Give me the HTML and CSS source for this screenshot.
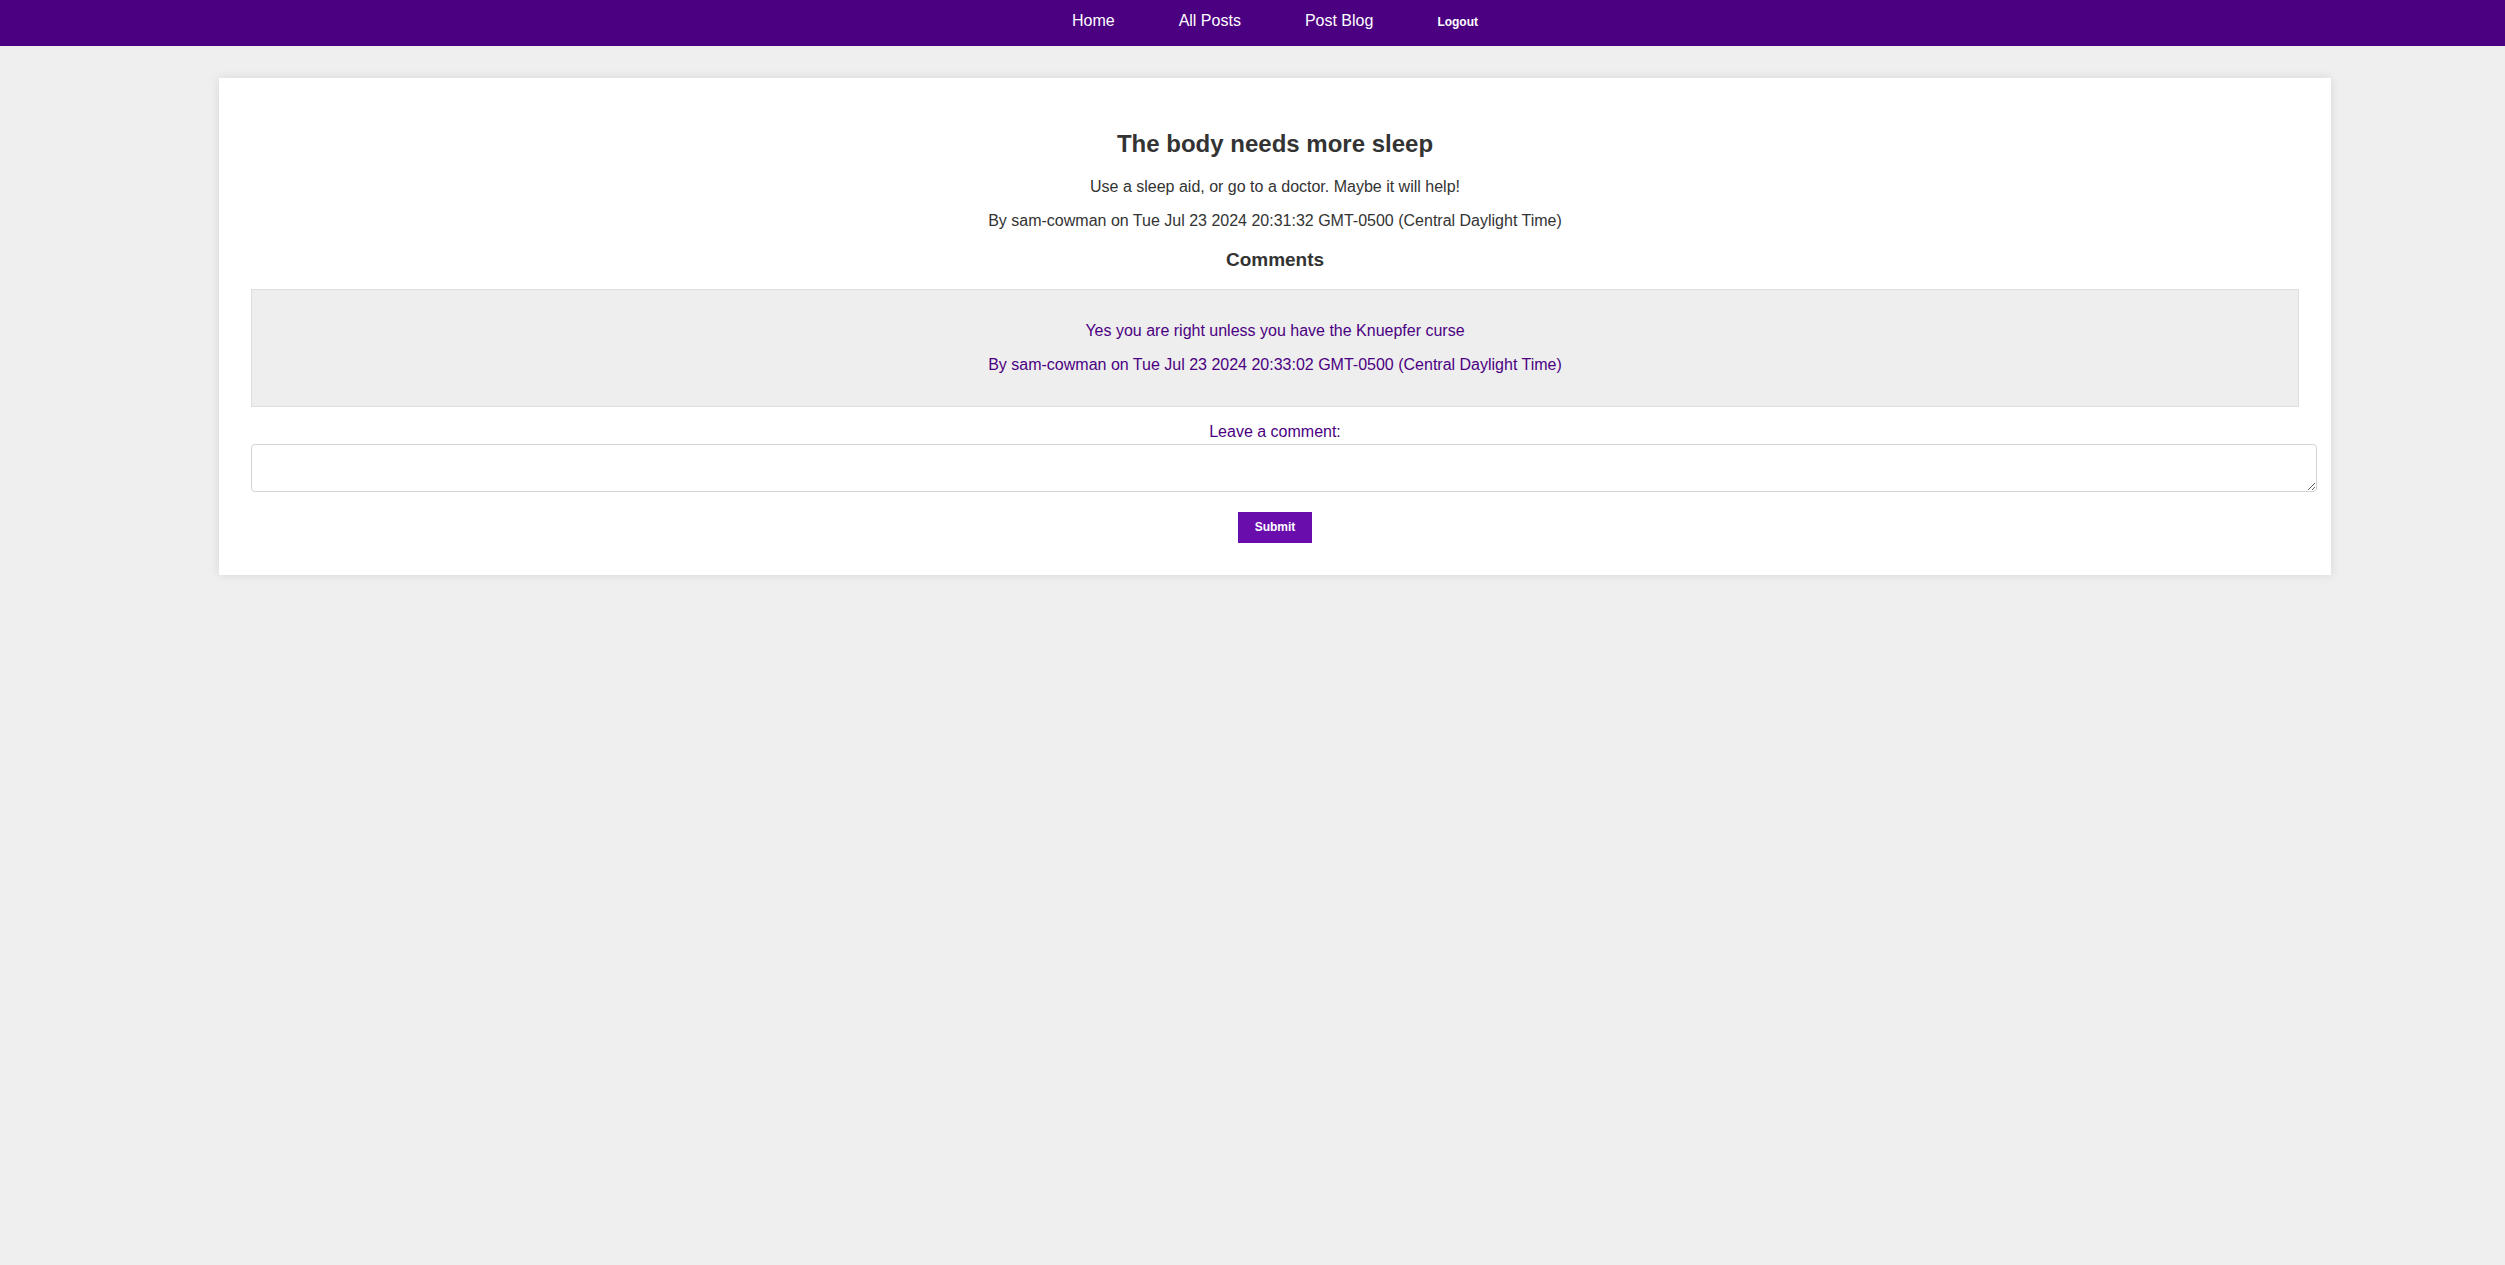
FILE: index.html
```html
<!DOCTYPE html>
<html lang="en">
<head>
<meta charset="utf-8">
<title>The body needs more sleep</title>
<link rel="stylesheet" href="styles.css">
</head>
<body>
<header class="site-header">
  <nav class="nav">
    <a href="#">Home</a>
    <a href="#">All Posts</a>
    <a href="#">Post Blog</a>
    <button type="button" class="logout">Logout</button>
  </nav>
</header>
<main class="page">
  <section class="post">
    <h2>The body needs more sleep</h2>
    <p>Use a sleep aid, or go to a doctor. Maybe it will help!</p>
    <p>By sam-cowman on Tue Jul 23 2024 20:31:32 GMT-0500 (Central Daylight Time)</p>
    <h3>Comments</h3>
    <article class="comment">
      <p>Yes you are right unless you have the Knuepfer curse</p>
      <p>By sam-cowman on Tue Jul 23 2024 20:33:02 GMT-0500 (Central Daylight Time)</p>
    </article>
    <form class="comment-form">
      <label for="comment">Leave a comment:</label>
      <textarea id="comment" name="comment" rows="2"></textarea>
      <button type="submit" class="submit">Submit</button>
    </form>
  </section>
</main>
</body>
</html>
```
FILE: styles.css
```css
body {
  margin: 0;
  background: #efefef;
  color: #333;
  font-family: "Liberation Sans", Arial, sans-serif;
  font-size: 16px;
  line-height: 18px;
}

.site-header {
  padding: 12px 0 16px 45px;
  background: #4b0082;
}

.nav {
  display: flex;
  justify-content: center;
  align-items: baseline;
  gap: 64px;
}

.nav a {
  color: #fff;
  text-decoration: none;
}

.logout,
.submit {
  border: 0;
  color: #fff;
  font: bold 12px/15px "Liberation Sans", Arial, sans-serif;
}

.logout {
  padding: 0;
  background: none;
}

.page {
  padding: 32px 0 32px 45px;
}

.post {
  max-width: 2048px;
  margin: 0 auto;
  padding: 32px;
  background: #fff;
  box-shadow: 0 0 10px rgba(0, 0, 0, 0.1);
  text-align: center;
}

h2 {
  margin: 20px 0;
  font-size: 24px;
  line-height: 28px;
}

h3 {
  margin: 19px 0;
  font-size: 19px;
  line-height: 21px;
}

p {
  margin: 16px 0;
}

.comment {
  margin-bottom: 16px;
  padding: 16px;
  border: 1px solid #ddd;
  background: #eee;
  color: #4b0082;
}

.comment-form label {
  display: block;
  margin-bottom: 3px;
  color: #4b0082;
}

.comment-form textarea {
  display: block;
  width: 100%;
  height: 30px;
  margin-bottom: 20px;
  padding: 8px;
  border: 1px solid #d3d3d3;
  border-radius: 4px;
}

.submit {
  display: block;
  margin: 0 auto;
  padding: 8px 17px;
  background: #6a0dad;
}
```
